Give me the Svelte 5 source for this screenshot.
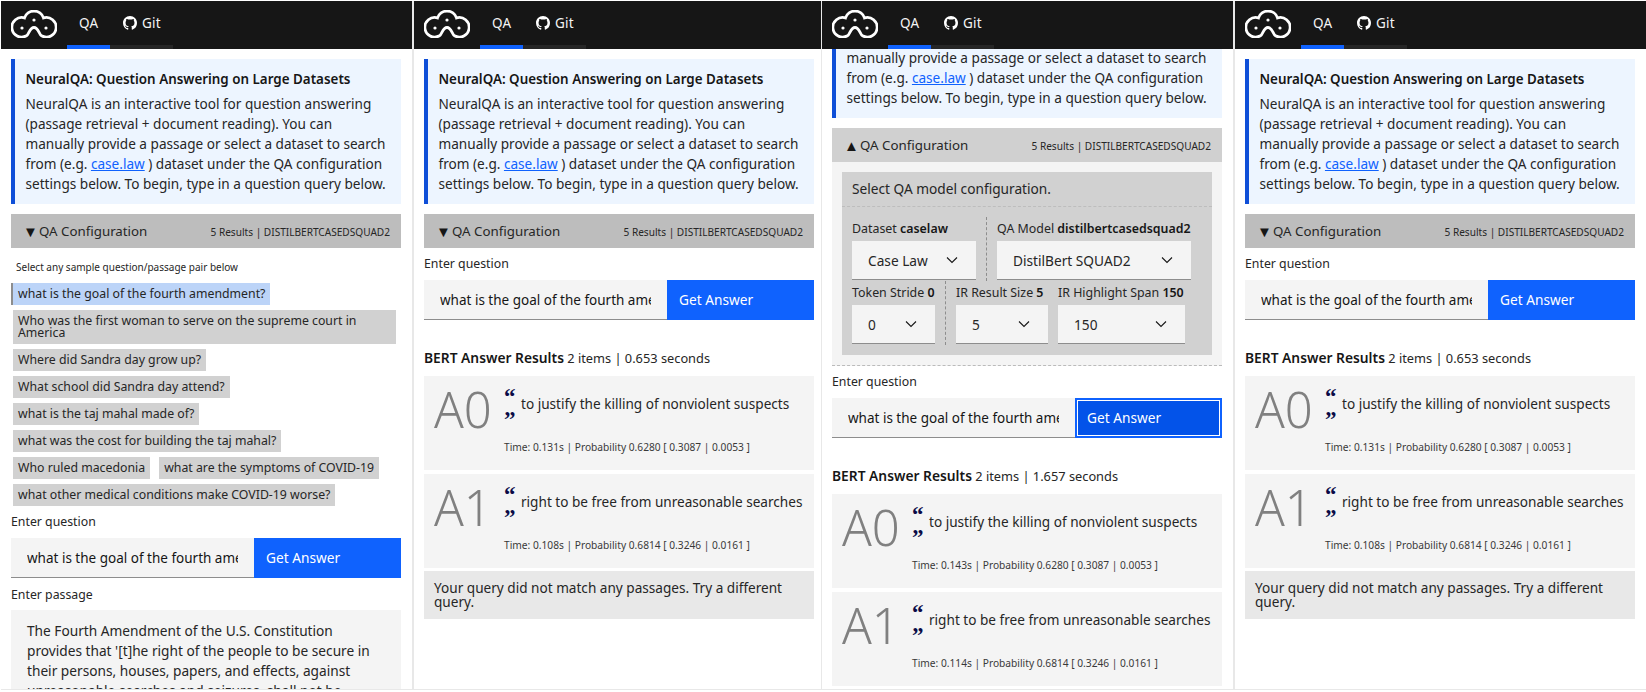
<script>
  const samples = [
    ['what is the goal of the fourth amendment?', true],
    ['Who was the first woman to serve on the supreme court in America', false],
    ['Where did Sandra day grow up?', false],
    ['What school did Sandra day attend?', false],
    ['what is the taj mahal made of?', false],
    ['what was the cost for building the taj mahal?', false],
    ['Who ruled macedonia', false],
    ['what are the symptoms of COVID-19', false],
    ['what other medical conditions make COVID-19 worse?', false]
  ];
  const question = 'what is the goal of the fourth amendment?';
  const passage = "The Fourth Amendment of the U.S. Constitution provides that '[t]he right of the people to be secure in their persons, houses, papers, and effects, against unreasonable searches and seizures, shall not be violated.'";
  const first = [
    { label: 'A0', text: 'to justify the killing of nonviolent suspects', time: '0.131', p: '0.6280 [ 0.3087 | 0.0053 ]' },
    { label: 'A1', text: 'right to be free from unreasonable searches', time: '0.108', p: '0.6814 [ 0.3246 | 0.0161 ]' }
  ];
  const second = [
    { label: 'A0', text: 'to justify the killing of nonviolent suspects', time: '0.143', p: '0.6280 [ 0.3087 | 0.0053 ]' },
    { label: 'A1', text: 'right to be free from unreasonable searches', time: '0.114', p: '0.6814 [ 0.3246 | 0.0161 ]' }
  ];
  function scrollDown(node, y) {
    node.scrollTop = y;
  }
</script>

{#snippet header()}
  <header class="top">
    <svg class="logo" viewBox="0 0 46 28" width="46" height="28" aria-label="NeuralQA">
      <path d="M15.5 25.8A9.8 9.8 0 1 1 13.5 7.9A10 10 0 0 1 32.5 7.9A9.8 9.8 0 1 1 30.5 25.8C28 24.6 27.5 17.5 23 17.5S18 24.6 15.5 25.8Z" fill="none" stroke="#fff" stroke-width="2.8" />
      <circle cx="11" cy="18" r="1.6" fill="#fff" />
      <circle cx="23" cy="10" r="1.6" fill="#fff" />
      <circle cx="35" cy="18" r="1.6" fill="#fff" />
    </svg>
    <nav class="tabs">
      <span class="tab active">QA</span>
      <span class="tab">
        <svg viewBox="0 0 16 16" width="14" height="14" fill="#fff"><path d="M8 0C3.58 0 0 3.58 0 8c0 3.54 2.29 6.53 5.47 7.59.4.07.55-.17.55-.38 0-.19-.01-.82-.01-1.49-2.01.37-2.53-.49-2.69-.94-.09-.23-.48-.94-.82-1.13-.28-.15-.68-.52-.01-.53.63-.01 1.08.58 1.23.82.72 1.21 1.87.87 2.33.66.07-.52.28-.87.51-1.07-1.78-.2-3.64-.89-3.64-3.95 0-.87.31-1.59.82-2.15-.08-.2-.36-1.02.08-2.12 0 0 .67-.21 2.2.82.64-.18 1.32-.27 2-.27.68 0 1.36.09 2 .27 1.53-1.04 2.2-.82 2.2-.82.44 1.1.16 1.92.08 2.12.51.56.82 1.27.82 2.15 0 3.07-1.87 3.75-3.65 3.95.29.25.54.73.54 1.48 0 1.07-.01 1.93-.01 2.2 0 .21.15.46.55.38A8.013 8.013 0 0016 8c0-4.42-3.58-8-8-8z" /></svg>
        Git
      </span>
    </nav>
  </header>
{/snippet}

{#snippet intro()}
  <section class="intro">
    <h1>NeuralQA: Question Answering on Large Datasets</h1>
    <p>NeuralQA is an interactive tool for question answering (passage retrieval + document reading). You can manually provide a passage or select a dataset to search from (e.g. <a href="#law">case.law</a> ) dataset under the QA configuration settings below. To begin, type in a question query below.</p>
  </section>
{/snippet}

{#snippet configBar(open)}
  <div class="config-bar" class:open>
    <span class="config-title"><span class="arrow">{open ? '▲' : '▼'}</span>QA Configuration</span>
    <span class="config-info">5 Results | DISTILBERTCASEDSQUAD2</span>
  </div>
{/snippet}

{#snippet ask(focused)}
  <div class="field-label">Enter question</div>
  <div class="ask">
    <input class="q" value={question} readonly />
    <button class="go" class:focused>Get Answer</button>
  </div>
{/snippet}

{#snippet results(items, secs, withMessage)}
  <h2 class="res-head"><b>BERT Answer Results</b> 2 items | {secs} seconds</h2>
  {#each items as a}
    <article class="answer">
      <div class="big">{a.label}</div>
      <div class="answer-main">
        <div class="answer-line">
          <span class="quotes"><span>“</span><span>”</span></span>
          <span class="answer-text">{a.text}</span>
        </div>
        <div class="meta">Time: {a.time}s | Probability {a.p}</div>
      </div>
    </article>
  {/each}
  {#if withMessage}
    <div class="msg">Your query did not match any passages. Try a different query.</div>
  {/if}
{/snippet}

{#snippet pick(value, cls)}
  <div class="select {cls}">
    <select><option>{value}</option></select>
    <svg viewBox="0 0 16 16" width="16" height="16"><path d="M3 5.5l5 5 5-5" fill="none" stroke="#161616" stroke-width="1.1" /></svg>
  </div>
{/snippet}

<div class="board">
  <div class="panel p1">
    <div class="view">
      {@render header()}
      <main class="scroll">
        {@render intro()}
        {@render configBar(false)}
        <div class="sample-label">Select any sample question/passage pair below</div>
        <div class="chips">
          {#each samples as [s, on]}
            <span class="chip" class:on>{s}</span>
          {/each}
        </div>
        {@render ask(false)}
        <div class="field-label passage-label">Enter passage</div>
        <textarea class="passage" readonly rows="6" value={passage}></textarea>
      </main>
    </div>
  </div>

  <div class="panel p2">
    <div class="view">
      {@render header()}
      <main class="scroll">
        {@render intro()}
        {@render configBar(false)}
        <div class="gap-closed"></div>
        {@render ask(false)}
        {@render results(first, '0.653', true)}
      </main>
    </div>
  </div>

  <div class="panel p3">
    <div class="view">
      {@render header()}
      <main class="scroll" use:scrollDown={88}>
        {@render intro()}
        {@render configBar(true)}
        <div class="config-body">
          <div class="config-inner">
            <div class="config-head">Select QA model configuration.</div>
            <div class="cfg-row first">
              <div class="cfg dataset"><div class="cfg-label">Dataset <b>caselaw</b></div>{@render pick('Case Law', 'w124')}</div>
              <div class="cfg model"><div class="cfg-label">QA Model <b>distilbertcasedsquad2</b></div>{@render pick('DistilBert SQUAD2', 'w194')}</div>
            </div>
            <div class="cfg-row second">
              <div class="cfg stride"><div class="cfg-label">Token Stride <b>0</b></div>{@render pick('0', 'w83')}</div>
              <div class="cfg size"><div class="cfg-label">IR Result Size <b>5</b></div>{@render pick('5', 'w92')}</div>
              <div class="cfg span"><div class="cfg-label">IR Highlight Span <b>150</b></div>{@render pick('150', 'w127')}</div>
            </div>
          </div>
        </div>
        <div class="gap-open"></div>
        {@render ask(true)}
        {@render results(second, '1.657', false)}
      </main>
    </div>
  </div>

  <div class="panel p4">
    <div class="view">
      {@render header()}
      <main class="scroll">
        {@render intro()}
        {@render configBar(false)}
        <div class="gap-closed"></div>
        {@render ask(false)}
        {@render results(first, '0.653', true)}
      </main>
    </div>
  </div>
</div>

<style>
  :global(body) {
    margin: 0;
    background: #fff;
    font-family: "Noto Sans", "Open Sans", sans-serif;
    color: #161616;
  }
  .board {
    display: flex;
    width: 1646px;
    height: 692px;
    padding: 1px 0 0 1px;
    box-sizing: border-box;
    overflow: hidden;
  }
  .panel {
    flex: none;
    height: 689px;
    overflow: hidden;
    box-sizing: border-box;
    border-right: 2px solid #e8e8e8;
    border-bottom: 1px solid #e8e8e8;
  }
  .p1 { width: 413px; }
  .p2 { width: 408px; border-right-width: 1px; }
  .p3 { width: 413px; }
  .p4 { width: 411px; border-right: 0; }
  .view {
    width: 411px;
    height: 688px;
    display: flex;
    flex-direction: column;
  }
  .top {
    flex: none;
    height: 48px;
    background: #161616;
    display: flex;
    color: #f4f4f4;
  }
  .logo { margin: 9px 0 0 10px; }
  .tabs { display: flex; margin-left: 10px; font-size: 13.5px; }
  .tab {
    display: flex;
    align-items: flex-start;
    gap: 5px;
    padding: 12px 12px 0 13px;
    height: 48px;
    box-sizing: border-box;
    border-bottom: 4px solid #262626;
    line-height: 20px;
    letter-spacing: 0.2px;
  }
  .tab svg { margin-top: 3px; }
  .tab.active { border-bottom-color: #0f62fe; width: 43px; padding-left: 12px; }
  .scroll {
    flex: 1;
    min-height: 0;
    overflow: hidden;
    padding: 10px 11px 0 10px;
    font-size: 13.6px;
  }
  .intro {
    background: #edf5ff;
    border-left: 4px solid #0f4fd8;
    padding: 10px 10px 10px 10.5px;
    height: 145px;
    box-sizing: border-box;
    margin-bottom: 10px;
  }
  .intro h1 {
    margin: 0 0 5px;
    font-size: 13.4px;
    line-height: 20px;
    font-weight: 600;
  }
  .intro p {
    margin: 0;
    font-size: 13.6px;
    line-height: 20px;
    color: #262626;
  }
  .intro a { color: #0f62fe; }
  .config-bar {
    height: 34px;
    background: #bdbdbd;
    display: flex;
    justify-content: space-between;
    align-items: center;
    padding: 0 11px 0 12px;
  }
  .config-bar.open { background: #d0d0d0; }
  .config-title { display: flex; align-items: center; font-size: 13.3px; line-height: 18px; padding-bottom: 1px; color: #262626; }
  .arrow { width: 16px; font-size: 15px; color: #161616; flex: none; }
  .config-info { font-size: 10.1px; color: #262626; padding-top: 1px; }
  .sample-label { font-size: 10px; margin: 12px 0 9px 5px; line-height: 14px; color: #262626; }
  .chips { display: flex; flex-wrap: wrap; gap: 5px 7px; margin-bottom: 8px; }
  .chip {
    border-left: 2px solid transparent;
    background: #d1d1d1 padding-box;
    padding: 5px;
    font-size: 12.3px;
    line-height: 12px;
    max-width: 385px;
    box-sizing: border-box;
    color: #262626;
  }
  .chip.on { background: #bcd4f8 padding-box; border-left-color: #8d8d8d; }
  .field-label { display: block; font-size: 12.3px; line-height: 16px; color: #262626; margin-bottom: 8px; }
  .passage-label { margin: 9px 0 7px; }
  .ask { display: flex; height: 40px; }
  .q {
    width: 243px;
    box-sizing: border-box;
    border: 0;
    border-bottom: 1px solid #8d8d8d;
    background: #f4f4f4;
    padding: 0 16px;
    font: 13.5px "Noto Sans", sans-serif;
    color: #161616;
    outline: 0;
  }
  .go {
    flex: 1;
    border: 0;
    background: #0f62fe;
    color: #fff;
    text-align: left;
    padding: 0 12px 2px;
    font: 13.7px "Noto Sans", sans-serif;
  }
  .go.focused {
    background: #0353e9;
    border: 2px solid #0f62fe;
    box-shadow: inset 0 0 0 1px #fff;
    padding: 0 10px 2px;
  }
  .passage {
    display: block;
    width: 100%;
    height: 200px;
    box-sizing: border-box;
    border: 0;
    background: #f4f4f4;
    padding: 11px 16px;
    font: 13.7px/20px "Noto Sans", sans-serif;
    color: #262626;
    resize: none;
    overflow: hidden;
    outline: 0;
  }
  .gap-closed { height: 8px; }
  .gap-open { height: 8px; }
  .res-head {
    margin: 30px 0 10px;
    font-size: 12.8px;
    line-height: 16px;
    font-weight: 400;
    color: #262626;
  }
  .res-head b { font-size: 13.8px; font-weight: 600; color: #161616; }
  .answer {
    display: flex;
    height: 94px;
    background: #f4f4f4;
    margin-bottom: 3.5px;
  }
  .big {
    width: 80px;
    flex: none;
    box-sizing: border-box;
    padding: 0 0 0 10px;
    font-size: 49px;
    font-weight: 300;
    line-height: 66px;
    color: #808080;
  }
  .answer-main { flex: 1; min-width: 0; }
  .answer-line { display: flex; height: 64px; padding-top: 9px; box-sizing: border-box; }
  .quotes {
    width: 17px;
    flex: none;
    display: flex;
    flex-direction: column;
    font: 700 23px/23px "Liberation Serif", serif;
    color: #0a0a46;
  }
  .answer-text { font-size: 13.6px; line-height: 20px; margin-top: 9px; color: #262626; }
  .meta { font-size: 10.2px; line-height: 14px; color: #393939; }
  .msg {
    background: #e8e8e8;
    padding: 10px;
    height: 48px;
    box-sizing: border-box;
    font-size: 13.6px;
    line-height: 14px;
    color: #262626;
  }
  .config-body {
    background: #f4f4f4;
    padding: 10px;
    border-bottom: 1px dashed #bbb;
  }
  .config-inner { background: #d1d1d1; height: 183px; }
  .config-head {
    height: 34px;
    padding: 0 10px;
    line-height: 34px;
    border-bottom: 1px dashed #bdbdbd;
    font-size: 13.7px;
    color: #262626;
  }
  .cfg-row { display: flex; padding-left: 10px; }
  .cfg-row.first { padding-top: 10px; height: 64px; }
  .cfg-row.second { height: 64px; }
  .cfg-label { font-size: 12.4px; line-height: 16px; height: 24px; padding-top: 4px; box-sizing: border-box; color: #262626; white-space: nowrap; }
  .cfg-label b { font-weight: 600; color: #161616; }
  .cfg.dataset { width: 134px; border-right: 1px dashed #8d8d8d; margin-right: 10px; }
  .cfg.stride { width: 93px; border-right: 1px dashed #8d8d8d; margin-right: 10px; }
  .cfg.size { width: 102px; }
  .select { position: relative; height: 39px; background: #f4f4f4; border-bottom: 1px solid #8d8d8d; box-sizing: border-box; }
  .select select {
    appearance: none;
    width: 100%;
    height: 100%;
    border: 0;
    background: transparent;
    padding: 0 16px;
    font: 13.7px "Noto Sans", sans-serif;
    color: #262626;
  }
  .select svg { position: absolute; right: 16px; top: 11px; pointer-events: none; }
  .w124 { width: 124px; }
  .w194 { width: 194px; }
  .w83 { width: 83px; }
  .w92 { width: 92px; }
  .w127 { width: 127px; }
</style>
